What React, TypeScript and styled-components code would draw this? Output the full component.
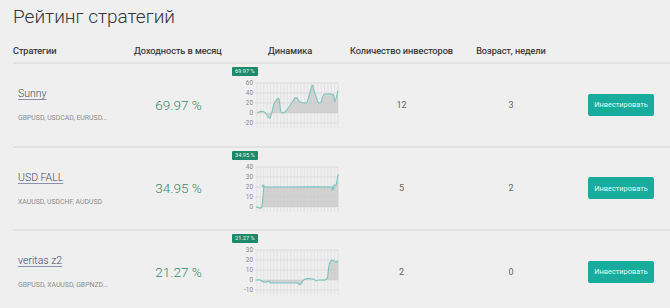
import styled, { createGlobalStyle } from 'styled-components';

const GlobalStyle = createGlobalStyle`
    body {
        margin: 0;
        background: #efefef;
        font-family: Roboto, 'Liberation Sans', sans-serif;
    }
`;

const Page = styled.div`
    padding-left: 13px;
    overflow: hidden;
`;

const Title = styled.h1`
    margin: 0 0 11px 0;
    padding-top: 5px;
    font-size: 19px;
    line-height: 24px;
    font-weight: 300;
    color: #363636;
`;

const Grid = styled.div`
    display: grid;
    grid-template-columns: 121px 89px 125px 107px 112px 1fr;
    align-items: center;
    box-sizing: border-box;
    border-bottom: 2px solid #e2e2e2;
`;

const HeadRow = styled(Grid)`
    height: 24px;
`;

const HeadCell = styled.div<{ $align?: string; $pad?: number }>`
    font-size: 9.1px;
    font-weight: 400;
    color: #2e2e2e;
    white-space: nowrap;
    -webkit-text-stroke: 0.15px #2e2e2e;
    text-align: ${(p) => p.$align || 'left'};
    padding-left: ${(p) => p.$pad || 0}px;
`;

const Row = styled(Grid)`
    height: 83.5px;
`;

const NameCell = styled.div`
    padding-left: 5px;
    display: flex;
    flex-direction: column;
    gap: 13px;
`;

const NameLink = styled.a`
    font-size: 10.5px;
    line-height: 14px;
    font-weight: 300;
    color: #3d4863;
    text-decoration: underline;
    text-decoration-color: #8c93a6;
    text-underline-offset: 2px;
    align-self: flex-start;
`;

const Pairs = styled.div`
    font-size: 6.9px;
    line-height: 8px;
    color: #8d8d8d;
    white-space: nowrap;
`;

const Return = styled.div`
    font-size: 13.5px;
    font-weight: 300;
    color: #358a68;
    text-align: center;
    white-space: nowrap;
`;

const ChartCell = styled.div`
    align-self: start;
    padding: 3px 0 0 9px;
    display: flex;
    flex-direction: column;
    align-items: flex-start;
`;

const Badge = styled.span`
    background: #1d8a6b;
    color: #e6f5ef;
    font-size: 5.6px;
    line-height: 9px;
    height: 9px;
    padding: 0 3px;
    border-radius: 1px;
    white-space: nowrap;
`;

const Plain = styled.div`
    font-size: 9px;
    color: #666;
    text-align: center;
`;

const ButtonCell = styled.div`
    display: flex;
    justify-content: flex-end;
    padding-right: 16px;
`;

const InvestButton = styled.button`
    width: 66px;
    height: 22px;
    border: none;
    border-radius: 2px;
    background: #17ac9c;
    color: #e8f8f6;
    font-family: inherit;
    font-size: 7.4px;
    padding: 0;
`;

type Pt = [number, number];

interface Strategy {
    name: string;
    pairs: string;
    ret: string;
    investors: number;
    age: number;
    max: number;
    min: number;
    points: Pt[];
}

const strategies: Strategy[] = [
    {
        name: 'Sunny',
        pairs: 'GBPUSD, USDCAD, EURUSD...',
        ret: '69.97 %',
        investors: 12,
        age: 3,
        max: 60,
        min: -20,
        points: [[25, 0], [28, 3], [31, 3], [33, 1], [38, -10], [42, 18], [45, 27], [47, 28], [49, 2], [53, 2], [58, 15], [63, 30], [65, 30], [68, 22], [75, 22], [80, 55], [82, 45], [86, 22], [89, 22], [92, 37], [101, 37], [103, 23], [106, 45]],
    },
    {
        name: 'USD FALL',
        pairs: 'XAUUSD, USDCHF, AUDUSD',
        ret: '34.95 %',
        investors: 5,
        age: 2,
        max: 40,
        min: 0,
        points: [[24, 0], [29.7, 0], [32, 21], [34.7, 20], [98, 20], [99.7, 17], [102, 22], [104, 22], [106.3, 33]],
    },
    {
        name: 'veritas z2',
        pairs: 'GBPUSD, XAUUSD, GBPNZD...',
        ret: '21.27 %',
        investors: 2,
        age: 0,
        max: 30,
        min: -10,
        points: [[23.7, 0], [28, 0], [31.3, -2], [35, -2], [37, -1], [39.7, -3], [64.7, -3], [67.3, -5], [69.7, -3], [73, 1], [81.3, 1], [84, -1], [86.3, 0], [93, 0], [95.3, 2], [97.3, 16], [99.7, 20], [102, 19], [104, 18], [106.3, 19]],
    },
];

// chart geometry inside the svg
const TOP = 7;
const H = 40;
const LEFT = 25;
const RIGHT = 106;

function curve(pts: Pt[]) {
    let d = `M${pts[0][0]},${pts[0][1]}`;
    const k = 0.13;
    for (let i = 0; i < pts.length - 1; i++) {
        const p0 = pts[i - 1] || pts[i];
        const p1 = pts[i];
        const p2 = pts[i + 1];
        const p3 = pts[i + 2] || p2;
        const c1x = p1[0] + (p2[0] - p0[0]) * k;
        const c1y = p1[1] + (p2[1] - p0[1]) * k;
        const c2x = p2[0] - (p3[0] - p1[0]) * k;
        const c2y = p2[1] - (p3[1] - p1[1]) * k;
        d += ` C${c1x},${c1y} ${c2x},${c2y} ${p2[0]},${p2[1]}`;
    }
    return d;
}

function MiniChart({ s }: { s: Strategy }) {
    const toY = (v: number) => TOP + ((s.max - v) / (s.max - s.min)) * H;
    const pts: Pt[] = s.points.map(([x, v]) => [x, toY(v)]);
    const zero = toY(0);
    const line = curve(pts);
    const area = `${line} L${pts[pts.length - 1][0]},${zero} L${pts[0][0]},${zero} Z`;
    const labels = [0, 1, 2, 3, 4].map((i) => s.max - ((s.max - s.min) / 4) * i);
    const verticals = Array.from({ length: 25 }, (_, i) => LEFT + ((RIGHT - LEFT) / 24) * i);

    return (
        <svg width="112" height="52" viewBox="0 0 112 52">
            {verticals.map((x) => (
                <line key={x} x1={x} x2={x} y1={TOP} y2={52} stroke="#dedede" strokeWidth="0.7" />
            ))}
            {labels.map((v) => (
                <g key={v}>
                    <line x1={LEFT - 2} x2={RIGHT} y1={toY(v)} y2={toY(v)} stroke="#d6d6d6" strokeWidth="0.7" />
                    <text x={21} y={toY(v) + 2.2} textAnchor="end" fontSize="6.4" fill="#8a8a8a" fontFamily="Roboto, sans-serif">
                        {v}
                    </text>
                </g>
            ))}
            <path d={area} fill="#c8c8c8" fillOpacity="0.75" />
            <path d={line} fill="none" stroke="#79c6be" strokeWidth="1.1" strokeLinejoin="round" />
        </svg>
    );
}

export default function App() {
    return (
        <Page>
            <GlobalStyle />
            <Title>Рейтинг стратегий</Title>
            <HeadRow>
                <HeadCell>Стратегии</HeadCell>
                <HeadCell>Доходность в месяц</HeadCell>
                <HeadCell $pad={45}>Динамика</HeadCell>
                <HeadCell $align="center">Количество инвесторов</HeadCell>
                <HeadCell $align="center">Возраст, недели</HeadCell>
                <div />
            </HeadRow>
            {strategies.map((s) => (
                <Row key={s.name}>
                    <NameCell>
                        <NameLink>{s.name}</NameLink>
                        <Pairs>{s.pairs}</Pairs>
                    </NameCell>
                    <Return>{s.ret}</Return>
                    <ChartCell>
                        <Badge>{s.ret}</Badge>
                        <MiniChart s={s} />
                    </ChartCell>
                    <Plain>{s.investors}</Plain>
                    <Plain>{s.age}</Plain>
                    <ButtonCell>
                        <InvestButton>Инвестировать</InvestButton>
                    </ButtonCell>
                </Row>
            ))}
        </Page>
    );
}
